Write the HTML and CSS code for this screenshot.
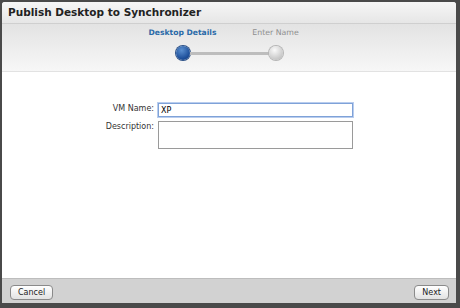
FILE: index.html
```html
<!DOCTYPE html>
<html lang="en">
  <head>
    <meta charset="UTF-8" />
    <title>Publish Desktop to Synchronizer</title>
    <link rel="stylesheet" href="styles.css">
  </head>
  <body>
    <div class="dialog">
      <div class="titlebar">Publish Desktop to Synchronizer</div>

      <div class="steps">
        <div class="step active">
          <span class="step-label">Desktop Details</span>
          <span class="dot"></span>
        </div>
        <div class="track"></div>
        <div class="step">
          <span class="step-label">Enter Name</span>
          <span class="dot"></span>
        </div>
      </div>

      <form class="body">
        <div class="form-row">
          <label for="vmname">VM Name:</label>
          <input type="text" id="vmname" class="focused" value="XP" />
        </div>
        <div class="form-row">
          <label for="desc">Description:</label>
          <textarea id="desc"></textarea>
        </div>
      </form>

      <div class="footer">
        <button type="button">Cancel</button>
        <button type="button">Next</button>
      </div>
    </div>
  </body>
</html>
```

FILE: styles.css
```css
html,
body {
  margin: 0;
  height: 100%;
}
body {
  font-family: "DejaVu Sans", Verdana, sans-serif;
  background: #4a4a4a;
  padding: 2px 4px 5px 2px;
  box-sizing: border-box;
}
.dialog {
  height: 100%;
  display: flex;
  flex-direction: column;
  background: #fff;
  border-radius: 3px 3px 0 0;
  overflow: hidden;
}
.titlebar {
  height: 21px;
  line-height: 21px;
  padding-left: 6px;
  font-size: 10.5px;
  font-weight: bold;
  color: #222;
  background: linear-gradient(#f6f6f6, #e6e6e6);
  border-bottom: 1px solid #cfcfcf;
}
.steps {
  height: 48px;
  display: flex;
  justify-content: center;
  align-items: flex-start;
  padding-top: 4px;
  box-sizing: border-box;
  background: linear-gradient(#e3e3e3, #f7f7f7);
  border-bottom: 1px solid #e2e2e2;
}
.step {
  width: 14px;
  display: flex;
  flex-direction: column;
  align-items: center;
}
.step-label {
  font-size: 7.8px;
  white-space: nowrap;
  color: #8e8e8e;
  height: 13px;
}
.step.active .step-label {
  font-size: 7.6px;
  color: #2a6aa8;
  font-weight: bold;
}
.dot {
  margin-top: 5px;
  width: 14px;
  height: 14px;
  border-radius: 50%;
  background: radial-gradient(circle at 40% 30%, #fafafa, #c8c8c8 70%, #aaa);
  box-shadow: 0 0 0 1px #b5b5b5;
}
.step.active .dot {
  background: radial-gradient(circle at 40% 30%, #5a8fd0, #1d4f9a 65%, #143b78);
  box-shadow: 0 0 0 1px #2a4f86;
}
.track {
  width: 79px;
  height: 3px;
  margin-top: 24px;
  background: #bdbdbd;
}
.body {
  flex: 1;
  padding-top: 31px;
}
.form-row {
  display: flex;
  align-items: flex-start;
  margin-bottom: 4px;
}
.form-row label {
  width: 152px;
  text-align: right;
  padding-right: 4px;
  font-size: 8px;
  color: #333;
  line-height: 12px;
}
input,
textarea {
  width: 195px;
  box-sizing: border-box;
  border: 1px solid #9a9a9a;
  font-family: "DejaVu Sans", Verdana, sans-serif;
  font-size: 8px;
  padding: 1px 2px;
  margin: 0;
}
input {
  height: 14px;
}
input.focused {
  border-color: #7fa2d8;
  box-shadow: 0 0 0 1px #b9cdee;
  outline: none;
}
textarea {
  height: 28px;
  resize: none;
}
.footer {
  height: 25px;
  display: flex;
  justify-content: space-between;
  align-items: center;
  padding: 2px 7px 0 8px;
  box-sizing: border-box;
  background: #d2d2d2;
  border-top: 1px solid #bdbdbd;
}
button {
  font-family: "DejaVu Sans", Verdana, sans-serif;
  font-size: 8px;
  color: #222;
  height: 15px;
  padding: 0 7px;
  border: 1px solid #8a8a8a;
  border-radius: 4px;
  background: linear-gradient(#ffffff, #e2e2e2);
  cursor: pointer;
}
```
